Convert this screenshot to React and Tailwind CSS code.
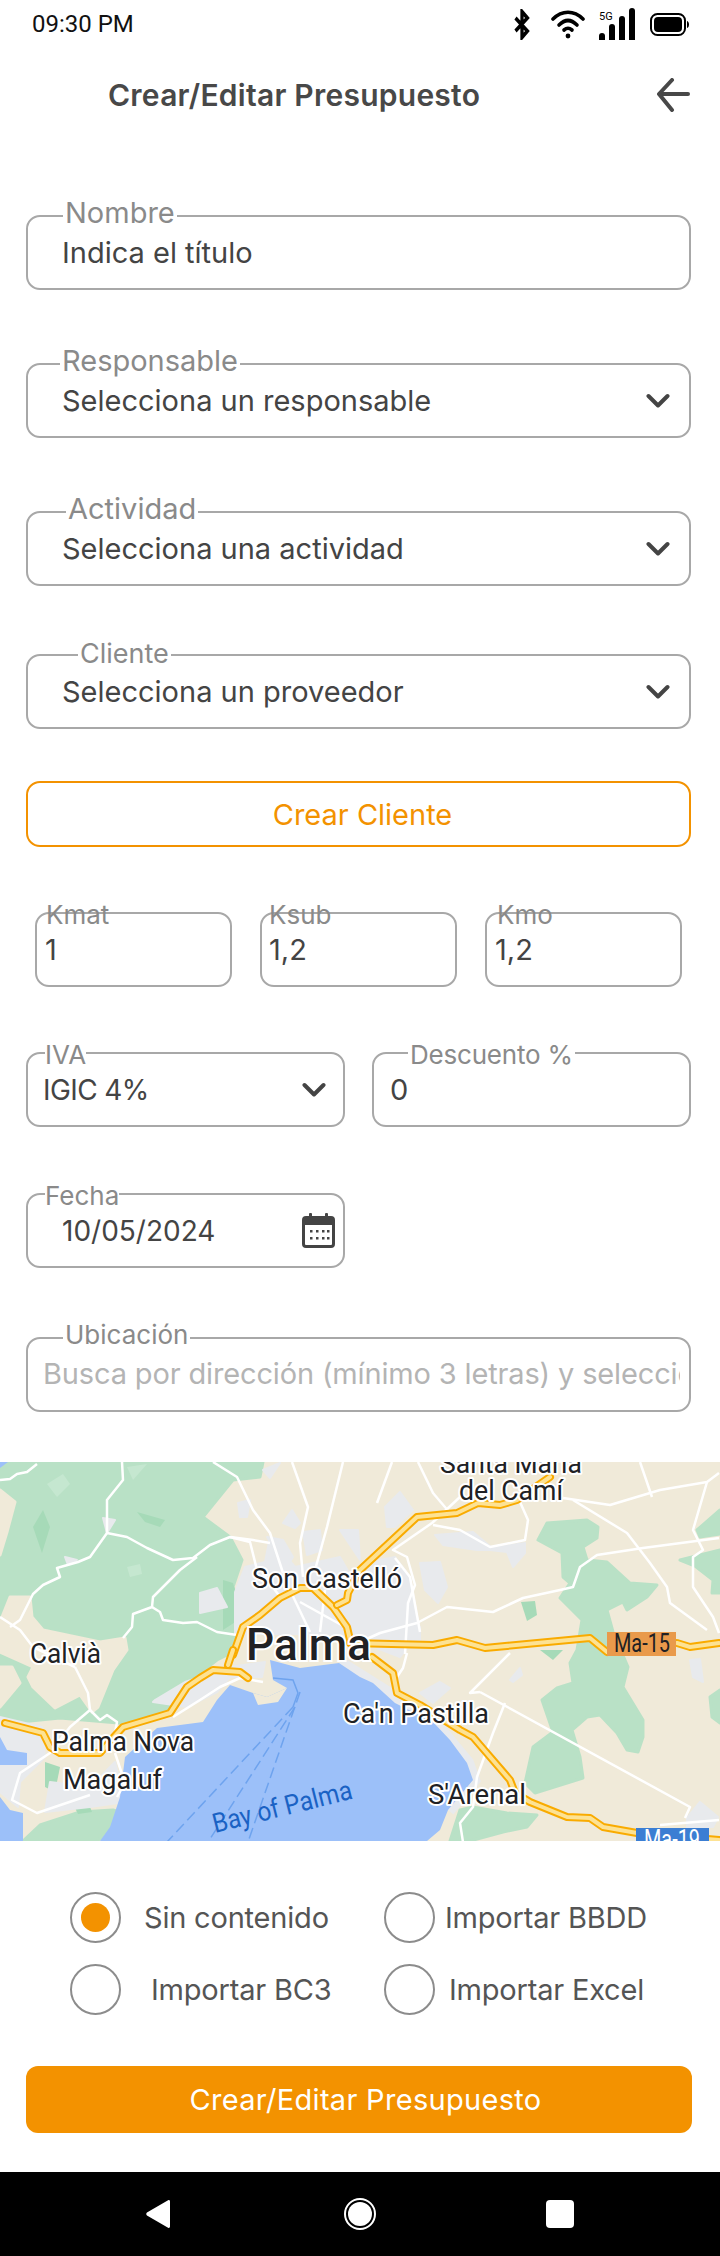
import { Fragment } from "react";

const LAND = "#f0ead9";
const GREEN = "#b9e1c6";
const GREEN_DARK = "#a6dab8";
const GREEN_LIGHT = "#c5e7d0";
const GREY = "#e8eaed";
const WATER = "#9cc0f9";

const greens = [
  "0,0 263,0 260,15 233,18 203,55 230,75 242,98 233,125 243,158 235,178 227,193 217,198 200,211 187,225 170,250 130,262 60,256 0,262",
  "538,78 547,61 587,58 598,65 597,76 583,85 587,98 607,100 630,121 657,123 647,135 627,148 623,140 607,148 613,170 628,205 623,225 643,258 643,275 638,290 627,288 617,271 600,253 587,255 572,268 580,295 583,316 535,331 525,321 533,285 553,270 542,238 557,226 573,221 570,201 577,188 582,158 560,136 570,121 563,115 562,91",
  "697,68 720,48 720,72 700,75",
  "680,98 720,88 720,131 712,131 713,118 695,104",
  "710,235 720,228 720,261 712,255",
  "460,348 473,345 507,351 537,353 527,365 503,370 470,379 450,379",
  "23,379 40,363 80,350 113,348 120,350 110,370 97,379",
];

const lands = [
  "0,28 15,40 7,70 0,93",
  "10,135 30,135 32,155 43,168 100,180 125,176 127,188 113,208 98,245 92,250 80,233 55,246 33,225 28,215 33,205 0,190 0,160",
  "0,205 12,205 20,221 0,245",
];

const greys = [
  "235,130 245,105 265,100 270,75 295,105 340,95 360,130 370,100 395,95 410,115 420,170 400,195 340,172 235,172",
  "200,131 217,126 227,145 200,151",
  "103,56 115,58 107,71",
  "65,95 77,98 68,103",
  "238,41 250,38 247,55 240,55",
  "283,61 292,48 300,61 295,66",
  "263,8 280,1 270,16",
  "267,75 283,78 293,95 283,111 275,88",
  "303,70 320,68 322,88 307,93",
  "340,68 358,68 360,98",
  "385,45 400,30 413,48 395,65 387,65",
  "435,73 473,70 492,86 525,81 525,91 513,105 507,90 490,88 477,88 443,83",
  "420,101 440,100 447,125 438,141 425,128",
  "408,165 420,165 420,178 408,178",
  "420,231 440,220 450,226 433,241",
  "510,218 520,206 522,213 513,220",
  "690,198 700,197 703,220 693,215",
  "687,356 700,340 718,355 713,365 687,365",
  "153,240 187,245 217,230 230,215 262,215 265,200 230,205 185,220 155,238",
  "0,255 42,265 45,295 20,320 18,345 0,330",
  "50,320 90,325 115,300 125,340 90,345 45,350",
];

const roads = [
  "0,18 10,17 17,12 27,10 37,2",
  "122,0 123,18 107,38 107,71 90,95 78,100 57,106 60,115 43,123 33,132 20,158 10,165",
  "107,71 127,75 147,86 173,98 193,96 210,83 230,75 253,78 270,81",
  "197,95 180,108 153,135 152,145 133,152 132,165 123,176",
  "152,145 160,150 163,158 183,161 197,160 217,170 237,173",
  "213,0 237,15 253,48 270,71 283,111",
  "292,0 308,45 300,81 303,115",
  "343,0 327,65 315,108",
  "230,75 250,80 257,108",
  "360,180 380,171 417,161 447,145 493,150 523,136 560,128 573,125 580,105 597,93 643,86 719,76",
  "460,35 432,61 393,88 407,95 415,123 408,141 405,192",
  "433,63 460,68 490,85 525,78 528,58 520,40",
  "563,36 610,43 660,28 707,20 719,11",
  "573,38 627,71 650,101 667,125 670,141 707,168",
  "707,20 693,68 703,88 693,95 693,125 713,155 719,171",
  "418,0 433,31 450,51",
  "392,0 377,41",
  "640,0 652,35",
  "480,230 690,345 685,356",
  "480,230 470,231 510,191",
  "505,241 493,271 477,315 473,345 460,361 463,380",
  "407,191 403,206 397,215",
  "660,363 719,358",
  "75,205 88,231 90,248 70,265 50,291 20,311 12,338 37,351 90,333",
  "90,248 100,258 107,253 117,260 115,271",
  "115,291 125,321 117,335",
  "0,155 20,168 33,185 75,205",
  "173,255 200,238 220,225 240,216 263,220",
  "263,150 290,128 310,170",
  "325,128 320,170",
  "345,165 300,140",
  "262,110 280,135",
  "395,96 410,115 420,170",
];

const highways = [
  "233,193 243,165 260,153 280,136 300,126 313,126 333,145 347,165 350,178",
  "337,143 347,138 348,131 360,108 403,68 417,55 457,51 478,41 500,43 517,38 550,15",
  "233,188 228,203",
  "248,216 240,210 213,208 200,216 187,225 170,251 123,265 113,276 100,291 60,291 50,285 43,271 5,261",
  "350,181 433,183 457,178 485,186 590,176 607,190",
  "677,181 690,185 719,181",
  "372,195 393,211 397,231 420,243 460,268 473,275 510,318 515,331 530,340 567,355 590,356 603,365 637,371 719,378",
];

const labels = [
  { text: "Santa María", x: 440, y: 11, w: 142, size: 27 },
  { text: "del Camí", x: 459, y: 38, w: 104, size: 27 },
  { text: "Son Castelló", x: 252, y: 126, w: 150, size: 27 },
  { text: "Calvià", x: 30, y: 201, w: 71, size: 27 },
  { text: "Palma Nova", x: 52, y: 289, w: 142, size: 27 },
  { text: "Magaluf", x: 63, y: 327, w: 99, size: 27 },
  { text: "Ca'n Pastilla", x: 343, y: 261, w: 146, size: 27 },
  { text: "S'Arenal", x: 428, y: 342, w: 98, size: 27 },
];

function MapView() {
  return (
    <svg viewBox="0 0 720 379" className="block h-[379px] w-[720px]" fontFamily="Roboto, sans-serif">
      <rect width="720" height="379" fill={LAND} />
      {greens.map((p) => (
        <polygon key={p} points={p} fill={GREEN} stroke={GREEN} strokeWidth="3" strokeLinejoin="round" />
      ))}
      {lands.map((p) => (
        <polygon key={p} points={p} fill={LAND} stroke={LAND} strokeWidth="3" strokeLinejoin="round" />
      ))}
      <polygon points="33,65 43,48 50,65 42,91" fill={GREEN_DARK} />
      <polygon points="223,118 233,121 243,155 223,168" fill={GREEN_DARK} />
      <polygon points="137,50 165,58 160,65 145,60" fill={GREEN_DARK} />
      <polygon points="47,22 63,12 70,22 57,35" fill={GREEN_LIGHT} />
      <polygon points="127,5 147,2 133,18" fill={GREEN_LIGHT} />
      <polygon points="127,105 140,102 142,112 130,115" fill={GREEN_LIGHT} />
      <polygon points="521,140 535,139 537,153 527,159" fill={GREEN_DARK} />
      <polygon points="540,188 563,188 553,198" fill={GREEN_DARK} />
      <polygon points="45,300 60,305 55,330 45,325" fill={GREEN_DARK} />
      <polygon points="72,340 85,332 92,350 78,352" fill={GREEN_DARK} />
      {greys.map((p) => (
        <polygon key={p} points={p} fill={GREY} stroke={GREY} strokeWidth="2" strokeLinejoin="round" />
      ))}
      <polyline points="339,201 382,228 433,260 467,301 473,318 448,348" fill="none" stroke={GREY} strokeWidth="14" />
      <polygon
        points="100,379 110,365 120,335 125,295 157,266 203,260 217,238 230,223 253,231 267,235 287,226 273,218 270,198 300,206 339,201 360,215 373,221 395,241 433,260 450,278 467,301 473,318 448,348 440,368 427,379"
        fill={WATER}
      />
      <polygon points="0,275 7,288 27,291 27,303 0,303" fill={WATER} />
      <polygon points="0,335 10,348 23,351 23,379 0,379" fill={WATER} />
      <polygon points="0,0 8,0 0,6" fill={WATER} />
      <polygon points="253,231 267,235 287,226 278,240 258,243" fill={LAND} />
      <g fill="none" stroke="#6ea3ee" strokeWidth="1.5">
        <polyline points="273,216 293,218 298,231 293,245" />
        <polyline points="293,245 167,380" strokeDasharray="11 5" />
        <polyline points="295,245 208,380" strokeDasharray="11 5" />
        <polyline points="300,230 248,380" strokeDasharray="11 5" />
      </g>
      {roads.map((p) => (
        <polyline key={p} points={p} fill="none" stroke="#fff" strokeWidth="2.5" strokeLinejoin="round" />
      ))}
      {highways.map((p) => (
        <Fragment key={p}>
          <polyline points={p} fill="none" stroke="#f9ab00" strokeWidth="8" strokeLinejoin="round" strokeLinecap="round" />
          <polyline points={p} fill="none" stroke="#fde293" strokeWidth="4" strokeLinejoin="round" strokeLinecap="round" />
        </Fragment>
      ))}
      {labels.map((l) => (
        <text
          key={l.text}
          x={l.x}
          y={l.y}
          fontSize={l.size}
          textLength={l.w}
          lengthAdjust="spacingAndGlyphs"
          fill="#202124"
          stroke="#fff"
          strokeWidth="4"
          strokeLinejoin="round"
          paintOrder="stroke"
        >
          {l.text}
        </text>
      ))}
      <text
        x="246"
        y="198"
        fontSize="44"
        fontWeight="500"
        textLength="125"
        lengthAdjust="spacingAndGlyphs"
        fill="#202124"
        stroke="#fff"
        strokeWidth="4"
        paintOrder="stroke"
      >
        Palma
      </text>
      <text x="215" y="371" fontSize="27" textLength="143" lengthAdjust="spacingAndGlyphs" fill="#1a62c4" transform="rotate(-14 215 371)">
        Bay of Palma
      </text>
      <rect x="607" y="170" width="69" height="24" fill="#e99a4b" />
      <text x="614" y="190" fontSize="25" textLength="56" lengthAdjust="spacingAndGlyphs" fill="#202124">
        Ma-15
      </text>
      <rect x="636" y="366" width="73" height="24" fill="#3b7ed3" />
      <text x="644" y="386" fontSize="25" textLength="56" lengthAdjust="spacingAndGlyphs" fill="#fff">
        Ma-19
      </text>
    </svg>
  );
}

function Chevron() {
  return (
    <svg viewBox="0 0 24 15" className="ml-auto h-[15px] w-[24px] shrink-0" fill="none" stroke="#444" strokeWidth="4" strokeLinecap="round" strokeLinejoin="round">
      <path d="M2.5 3 12 12.5 21.5 3" />
    </svg>
  );
}

function CalendarIcon() {
  return (
    <svg viewBox="0 0 33 35" className="ml-auto mr-[2px] h-[35px] w-[33px] shrink-0" fill="#444">
      <rect x="7" y="0" width="3" height="7" rx="1" />
      <rect x="23" y="0" width="3" height="7" rx="1" />
      <path d="M4 3h25a4 4 0 0 1 4 4v24a4 4 0 0 1-4 4H4a4 4 0 0 1-4-4V7a4 4 0 0 1 4-4Zm-1 9v19a1 1 0 0 0 1 1h25a1 1 0 0 0 1-1V12H3Z" fillRule="evenodd" />
      {[9, 15, 21, 26].map((x) => (
        <rect key={x} x={x - 1} y="17" width="2.5" height="2.5" />
      ))}
      {[9, 15, 21, 26].map((x) => (
        <rect key={x} x={x - 1} y="24" width="2.5" height="2.5" />
      ))}
    </svg>
  );
}

function Field({ label, labelClass, width, className = "", children }) {
  return (
    <div className={`relative flex h-[75px] items-center rounded-[14px] border-2 border-[#a8a8a8] ${width} ${className}`}>
      <span className={`absolute whitespace-nowrap leading-none text-[#8a8a8a] ${labelClass}`}>{label}</span>
      {children}
    </div>
  );
}

function Value({ children, className = "text-[29px] text-[#444]" }) {
  return <span className={`whitespace-nowrap leading-none ${className}`}>{children}</span>;
}

function Radio({ checked, label, className }) {
  return (
    <div className="flex items-center">
      <div className="flex h-[51px] w-[51px] shrink-0 items-center justify-center rounded-full border-2 border-[#8c8c8c]">
        {checked && <div className="h-[29px] w-[29px] rounded-full bg-[#f39200]" />}
      </div>
      <span className={`whitespace-nowrap text-[29px] leading-none tracking-[-0.2px] text-[#555] ${className}`}>{label}</span>
    </div>
  );
}

export default function App() {
  return (
    <div className="flex h-[2256px] w-[720px] flex-col overflow-hidden bg-white font-['Inter',sans-serif]">
      <div className="flex h-[48px] shrink-0 items-center pl-[32px]">
        <span className="font-['Roboto',sans-serif] text-[24px] leading-none text-[#111]">09:30 PM</span>
        <div className="ml-auto mr-[31px] flex items-center">
          <svg viewBox="0 0 24 24" className="mr-[16px] h-[31px] w-[26px]" fill="none" stroke="#000" strokeWidth="3" preserveAspectRatio="none">
            <path d="m6 7 11 10-5 5V2l5 5L6 17" />
          </svg>
          <svg viewBox="0 0 34 29" className="mr-[14px] h-[29px] w-[34px]" fill="none" stroke="#000" strokeWidth="3.6" strokeLinecap="round">
            <path d="M2 9c9-9 21-9 30 0" />
            <path d="M8 15c6-6 12-6 18 0" />
            <path d="M13 20c3-2.5 5-2.5 8 0" />
            <circle cx="17" cy="26" r="2.4" fill="#000" stroke="none" />
          </svg>
          <div className="relative mr-[15px] h-[32px] w-[36px]">
            <span className="absolute left-0 top-[3px] font-['Roboto',sans-serif] text-[11px] leading-none text-black">5G</span>
            <div className="absolute inset-0 flex items-end justify-between">
              <div className="h-[7px] w-[6px] rounded-t-[3px] bg-black" />
              <div className="h-[16px] w-[6px] rounded-t-[3px] bg-black" />
              <div className="h-[24px] w-[6px] rounded-t-[3px] bg-black" />
              <div className="h-[32px] w-[6px] rounded-t-[3px] bg-black" />
            </div>
          </div>
          <svg viewBox="0 0 39 23" className="h-[23px] w-[39px]">
            <rect x="1" y="1" width="34" height="21" rx="6.5" fill="none" stroke="#000" strokeWidth="2" />
            <rect x="4" y="4" width="28" height="15" rx="4" fill="#000" />
            <path d="M37 8c1.5.5 2 2 2 3.5s-.5 3-2 3.5Z" fill="#000" />
          </svg>
        </div>
      </div>

      <div className="mt-[30px] flex h-[34px] shrink-0 items-center pl-[108px] pr-[30px]">
        <span className="text-[30px] font-semibold leading-none tracking-[0.25px] text-[#484848]">Crear/Editar Presupuesto</span>
        <svg viewBox="0 0 33 34" className="ml-auto h-[34px] w-[33px]" fill="none" stroke="#484848" strokeWidth="4" strokeLinecap="round" strokeLinejoin="round">
          <path d="M31 16H3" />
          <path d="M15 2 2 16l13 16" />
        </svg>
      </div>

      <div className="mt-[103px] flex shrink-0 flex-col px-[26px]">
        <Field label="Nombre" labelClass="left-[35px] top-[-19px] bg-white px-[2px] text-[29px]" width="w-[665px]" className="pl-[34px]">
          <Value>Indica el título</Value>
        </Field>
        <Field label="Responsable" labelClass="left-[32px] top-[-19px] bg-white px-[2px] text-[29px]" width="w-[665px]" className="mt-[73px] pl-[34px] pr-[19px]">
          <Value>Selecciona un responsable</Value>
          <Chevron />
        </Field>
        <Field label="Actividad" labelClass="left-[38px] top-[-19px] bg-white px-[2px] text-[29px]" width="w-[665px]" className="mt-[73px] pl-[34px] pr-[19px]">
          <Value>Selecciona una actividad</Value>
          <Chevron />
        </Field>
        <Field label="Cliente" labelClass="left-[50px] top-[-16px] bg-white px-[2px] text-[27px]" width="w-[665px]" className="mt-[68px] pl-[34px] pr-[19px]">
          <Value>Selecciona un proveedor</Value>
          <Chevron />
        </Field>
        <button className="mt-[52px] flex h-[66px] w-[665px] items-center justify-center rounded-[14px] border-2 border-[#f39200] pl-[8px] text-[29px] leading-none text-[#f39200]">
          Crear Cliente
        </button>

        <div className="mt-[65px] flex gap-[28px] pl-[9px]">
          <Field label="Kmat" labelClass="left-[9px] top-[-12px] text-[26px]" width="w-[197px]" className="pl-[8px]">
            <Value>1</Value>
          </Field>
          <Field label="Ksub" labelClass="left-[7px] top-[-12px] text-[26px]" width="w-[197px]" className="pl-[7px]">
            <Value>1,2</Value>
          </Field>
          <Field label="Kmo" labelClass="left-[10px] top-[-12px] text-[26px]" width="w-[197px]" className="pl-[8px]">
            <Value>1,2</Value>
          </Field>
        </div>

        <div className="mt-[65px] flex gap-[27px]">
          <Field label="IVA" labelClass="left-[17px] top-[-12px] bg-white text-[26px]" width="w-[319px]" className="pl-[15px] pr-[17px]">
            <Value className="text-[28px] tracking-[-0.6px] text-[#444]">IGIC 4%</Value>
            <Chevron />
          </Field>
          <Field label="Descuento %" labelClass="left-[34px] top-[-12px] bg-white px-[2px] text-[26px] tracking-[-0.2px]" width="w-[319px]" className="pl-[16px]">
            <Value>0</Value>
          </Field>
        </div>

        <Field label="Fecha" labelClass="left-[17px] top-[-12px] bg-white text-[26px]" width="w-[319px]" className="mt-[66px] pl-[34px] pr-[6px]">
          <Value className="text-[28px] text-[#444]">10/05/2024</Value>
          <CalendarIcon />
        </Field>

        <Field label="Ubicación" labelClass="left-[35px] top-[-17px] bg-white px-[2px] text-[26px]" width="w-[665px]" className="mt-[69px] pl-[15px] pr-[9px]">
          <div className="w-full overflow-hidden">
            <Value className="text-[29px] tracking-[-0.15px] text-[#b4b4b4]">Busca por dirección (mínimo 3 letras) y seleccione una opción</Value>
          </div>
        </Field>
      </div>

      <div className="mt-[50px] shrink-0">
        <MapView />
      </div>

      <div className="mt-[51px] grid shrink-0 grid-cols-[314px_1fr] gap-y-[21px] pl-[70px]">
        <Radio checked label="Sin contenido" className="ml-[23px]" />
        <Radio label="Importar BBDD" className="ml-[10px]" />
        <Radio label="Importar BC3" className="ml-[30px]" />
        <Radio label="Importar Excel" className="ml-[14px]" />
      </div>

      <div className="mt-[51px] shrink-0 px-[26px]">
        <button className="flex h-[67px] w-[666px] items-center justify-center rounded-[12px] bg-[#f39200] pl-[13px] text-[29px] leading-none tracking-[0.3px] text-white">
          Crear/Editar Presupuesto
        </button>
      </div>

      <div className="mt-[39px] flex h-[84px] shrink-0 items-center bg-black pl-[146px]">
        <svg viewBox="0 0 25 28" className="h-[28px] w-[24px]" fill="#fff" preserveAspectRatio="none">
          <path d="M23 .3c1-.6 2 0 2 1.2v25c0 1.2-1 1.8-2 1.2L1 15.5c-1-.7-1-2.3 0-3Z" />
        </svg>
        <div className="ml-[174px] flex h-[32px] w-[32px] items-center justify-center rounded-full border-2 border-white">
          <div className="h-[24px] w-[24px] rounded-full bg-white" />
        </div>
        <div className="ml-[170px] h-[28px] w-[28px] rounded-[4px] bg-white" />
      </div>
    </div>
  );
}
